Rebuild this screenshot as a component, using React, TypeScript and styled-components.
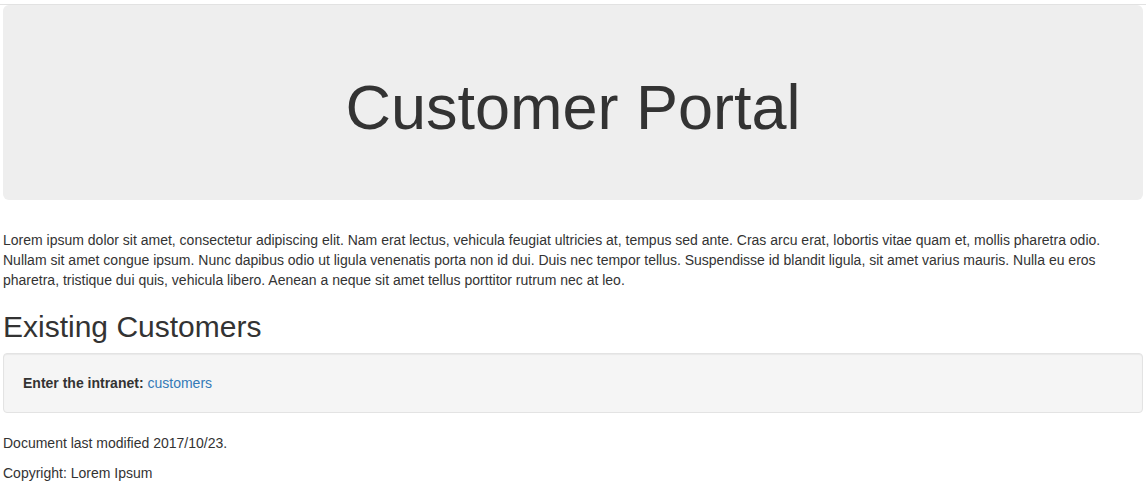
import React from 'react';
import styled, { createGlobalStyle } from 'styled-components';

const GlobalStyle = createGlobalStyle`
    html, body {
        margin: 0;
        padding: 0;
        background: #fff;
    }
    body {
        font-family: "Liberation Sans", Arial, Helvetica, sans-serif;
        font-size: 14px;
        line-height: 20px;
        color: #333;
    }
`;

const TopRule = styled.div`
    height: 4px;
    border-bottom: 1px solid #e2e2e2;
`;

const Page = styled.div`
    padding: 0 3px;
`;

const Jumbotron = styled.div`
    background: #eee;
    border-radius: 6px;
    padding: 48px 60px;
    margin-bottom: 30px;
    text-align: center;
`;

const Title = styled.h1`
    margin: 20px 0 10px;
    font-size: 63px;
    line-height: 69px;
    font-weight: 400;
    color: #333;
`;

const Paragraph = styled.p`
    margin: 0 0 10px;
`;

const SectionTitle = styled.h2`
    margin: 20px 0 10px;
    font-size: 30px;
    line-height: 33px;
    font-weight: 400;
`;

const Well = styled.div`
    background: #f5f5f5;
    border: 1px solid #e3e3e3;
    border-radius: 4px;
    box-shadow: inset 0 1px 1px rgba(0, 0, 0, 0.05);
    padding: 19px;
    margin-bottom: 20px;
`;

const Link = styled.a`
    color: #337ab7;
    text-decoration: none;
`;

export default function App() {
    return (
        <>
            <GlobalStyle />
            <TopRule />
            <Page>
                <Jumbotron>
                    <Title>Customer Portal</Title>
                </Jumbotron>
                <Paragraph>
                    Lorem ipsum dolor sit amet, consectetur adipiscing elit. Nam erat lectus, vehicula feugiat ultricies at, tempus sed ante. Cras arcu erat, lobortis vitae quam et, mollis pharetra odio. Nullam sit amet congue ipsum. Nunc dapibus odio ut ligula venenatis porta non id dui. Duis nec tempor tellus. Suspendisse id blandit ligula, sit amet varius mauris. Nulla eu eros pharetra, tristique dui quis, vehicula libero. Aenean a neque sit amet tellus porttitor rutrum nec at leo.
                </Paragraph>
                <SectionTitle>Existing Customers</SectionTitle>
                <Well>
                    <strong>Enter the intranet:</strong> <Link href="#">customers</Link>
                </Well>
                <Paragraph>Document last modified 2017/10/23.</Paragraph>
                <Paragraph>Copyright: Lorem Ipsum</Paragraph>
            </Page>
        </>
    );
}
